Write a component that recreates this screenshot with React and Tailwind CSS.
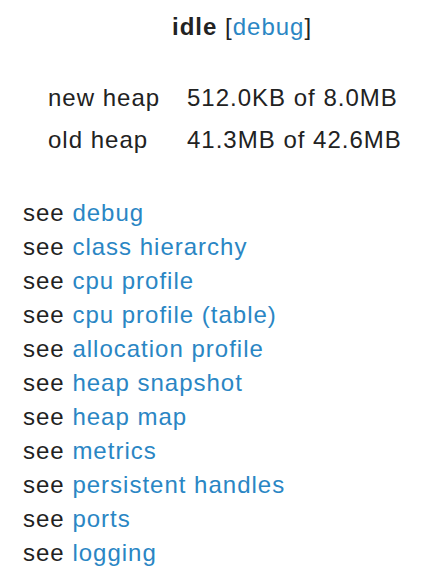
export default function App() {
  const links = [
    "debug",
    "class hierarchy",
    "cpu profile",
    "cpu profile (table)",
    "allocation profile",
    "heap snapshot",
    "heap map",
    "metrics",
    "persistent handles",
    "ports",
    "logging",
  ];
  return (
    <div
      className="w-[424px] h-[584px] bg-white text-[#222] text-[24px] tracking-[1px] overflow-hidden"
      style={{ fontFamily: '"Liberation Sans", Arial, sans-serif' }}
    >
      <div className="pt-[10px] pl-[172px] leading-[34px]">
        <span className="font-bold">idle</span>{" "}
        <span>[<span className="text-[#2a86c4]">debug</span>]</span>
      </div>
      <div className="pl-[48px] pt-[37px] flex flex-col gap-[8px] leading-[34px]">
        <div className="flex">
          <span className="w-[139px]">new heap</span>
          <span>512.0KB of 8.0MB</span>
        </div>
        <div className="flex">
          <span className="w-[139px]">old heap</span>
          <span>41.3MB of 42.6MB</span>
        </div>
      </div>
      <div className="pl-[23px] pt-[39px] flex flex-col leading-[34px]">
        {links.map((l) => (
          <div key={l}>
            see <span className="text-[#2a86c4]">{l}</span>
          </div>
        ))}
      </div>
    </div>
  );
}
